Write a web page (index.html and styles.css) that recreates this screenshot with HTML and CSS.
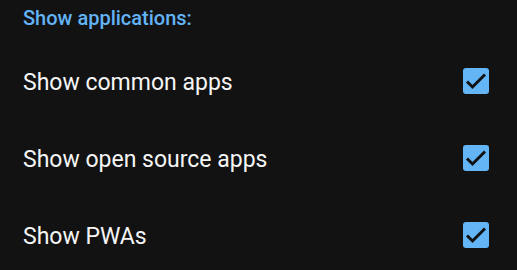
FILE: index.html
```html
<!DOCTYPE html>
<html lang="en">
<head>
  <meta charset="UTF-8">
  <meta name="viewport" content="width=device-width, initial-scale=1.0">
  <title>Settings</title>
  <link rel="stylesheet" href="styles.css">
</head>
<body>
  <div class="group">
    <div class="group-title">Show applications:</div>

    <label class="row">
      <span class="label">Show common apps</span>
      <input type="checkbox" class="check" checked>
      <span class="box"><svg viewBox="0 0 26 26"><path d="M4 13.5l5.5 5.5 12.5-12.5"/></svg></span>
    </label>

    <label class="row">
      <span class="label">Show open source apps</span>
      <input type="checkbox" class="check" checked>
      <span class="box"><svg viewBox="0 0 26 26"><path d="M4 13.5l5.5 5.5 12.5-12.5"/></svg></span>
    </label>

    <label class="row">
      <span class="label">Show PWAs</span>
      <input type="checkbox" class="check" checked>
      <span class="box"><svg viewBox="0 0 26 26"><path d="M4 13.5l5.5 5.5 12.5-12.5"/></svg></span>
    </label>
  </div>
</body>
</html>
```

FILE: styles.css
```css
html, body {
  margin: 0;
  background: #121212;
}

body {
  font-family: Roboto, "Noto Sans", sans-serif;
  color: #f5f5f5;
}

.group {
  padding: 5px 28px 0 23px;
}

.group-title {
  color: #62b4f6;
  font-size: 20px;
  font-weight: 500;
  line-height: 26px;
  height: 37px;
}

.row {
  display: flex;
  align-items: center;
  justify-content: space-between;
  height: 77px;
  cursor: pointer;
}

.label {
  font-size: 23px;
  margin-top: 4px;
}

.check {
  display: none;
}

.box {
  width: 26px;
  height: 26px;
  border-radius: 3px;
  background: #64b5f6;
}

.box svg {
  display: block;
  width: 26px;
  height: 26px;
  fill: none;
  stroke: #121212;
  stroke-width: 3;
}
```
